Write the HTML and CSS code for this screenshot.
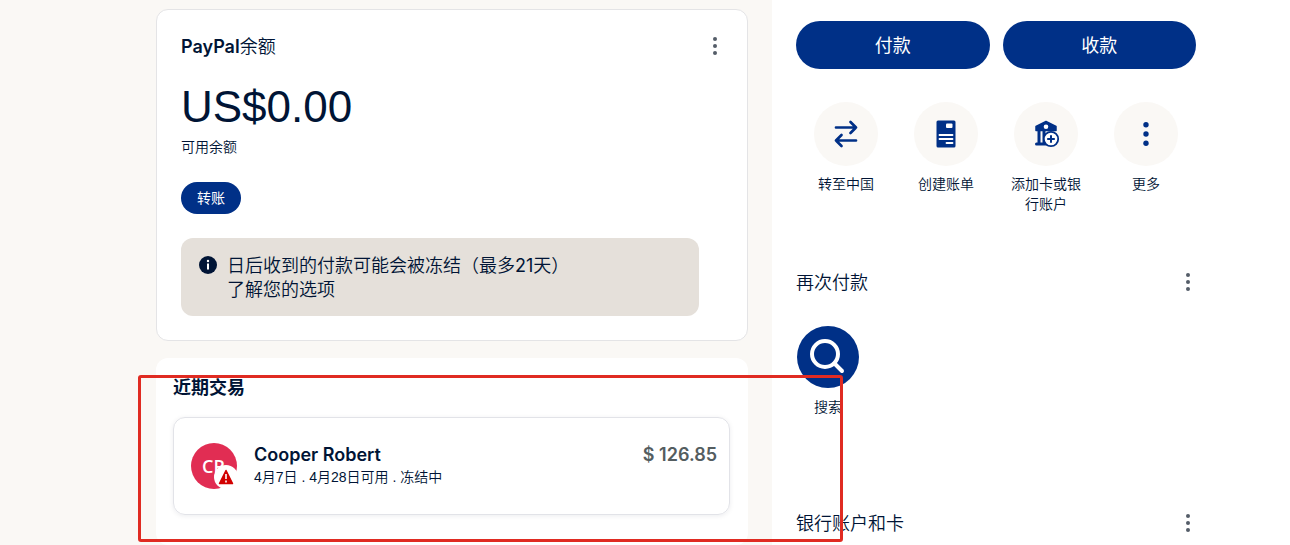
FILE: index.html
```html
<!DOCTYPE html>
<html lang="zh-CN">
<head>
    <meta charset="UTF-8">
    <meta name="viewport" content="width=device-width, initial-scale=1.0">
    <title>PayPal</title>
    <link rel="stylesheet" href="styles.css">
</head>
<body>
    <div class="page">
        <main class="main">
            <section class="card balance">
                <div class="section-head">
                    <h2><strong>PayPal</strong>余额</h2>
                    <button class="dots" type="button" aria-label="更多选项">
                        <svg width="6" height="20" viewBox="0 0 6 20"><circle cx="3" cy="3" r="2"/><circle cx="3" cy="10" r="2"/><circle cx="3" cy="17" r="2"/></svg>
                    </button>
                </div>
                <div class="amount">US$0.00</div>
                <div class="amount-label">可用余额</div>
                <button class="btn btn-small" type="button">转账</button>
                <div class="notice">
                    <svg class="notice-icon" width="18" height="18" viewBox="0 0 18 18">
                        <circle cx="9" cy="9" r="9" fill="#001435"/>
                        <circle cx="9" cy="5" r="1.2" fill="#fff"/>
                        <path d="M9 7.6V13.6" stroke="#fff" stroke-width="2"/>
                    </svg>
                    <p>日后收到的付款可能会被冻结（最多<span class="days">21</span>天）<br>了解您的选项</p>
                </div>
            </section>

            <section class="activity">
                <h2>近期交易</h2>
                <a class="transaction" href="#">
                    <svg class="avatar" width="48" height="48" viewBox="0 0 48 48">
                        <circle cx="23" cy="23" r="23" fill="#e12d53"/>
                        <text x="11" y="30" class="initials">CR</text>
                        <circle cx="35" cy="34" r="12" fill="#fff"/>
                        <path d="M35 27.5L41.5 40.5H28.5Z" fill="#d20000" stroke="#d20000" stroke-width="1.5" stroke-linejoin="round"/>
                        <path d="M35 31V36M35 37.6V39.4" stroke="#fff" stroke-width="1.6"/>
                    </svg>
                    <div class="details">
                        <div class="name">Cooper Robert</div>
                        <div class="status">4月7日 . 4月28日可用 . 冻结中</div>
                    </div>
                    <div class="price">$ 126.85</div>
                </a>
                <div class="highlight"></div>
            </section>
        </main>

        <aside class="side">
            <div class="side-inner">
                <div class="pay-buttons">
                    <button class="btn" type="button">付款</button>
                    <button class="btn" type="button">收款</button>
                </div>

                <nav class="shortcuts">
                    <a class="shortcut" href="#">
                        <span class="circle">
                            <svg width="32" height="32" viewBox="0 0 32 32" fill="none" stroke="#003087" stroke-width="2.7" stroke-linecap="round" stroke-linejoin="round">
                                <path d="M6 9.5H26M20.5 4L26 9.5L20.5 15M26 22.5H6M11.5 17L6 22.5L11.5 28"/>
                            </svg>
                        </span>
                        <span>转至中国</span>
                    </a>
                    <a class="shortcut" href="#">
                        <span class="circle">
                            <svg width="32" height="32" viewBox="0 0 32 32">
                                <rect x="6.5" y="2.5" width="19" height="27" rx="1.5" fill="#003087"/>
                                <rect x="16" y="5.5" width="6.5" height="4.5" rx="1" fill="#fff"/>
                                <path d="M9.5 17H22.5M9.5 21H22.5M16.5 25H22.5" stroke="#fff" stroke-width="1.8" stroke-linecap="round"/>
                            </svg>
                        </span>
                        <span>创建账单</span>
                    </a>
                    <a class="shortcut" href="#">
                        <span class="circle">
                            <svg width="32" height="32" viewBox="0 0 32 32">
                                <path d="M16 3.5L26 8.5V12.5H6V8.5Z" fill="#003087" stroke="#003087" stroke-width="1.5" stroke-linejoin="round"/>
                                <circle cx="16" cy="8.8" r="2.3" fill="#fff"/>
                                <path d="M6.5 26H18" stroke="#003087" stroke-width="3" stroke-linecap="round"/>
                                <path d="M9 12V26M14 12V26" stroke="#003087" stroke-width="3"/>
                                <circle cx="21" cy="21" r="7.2" fill="#fff" stroke="#003087" stroke-width="1.8"/>
                                <path d="M21 17.2V24.8M17.2 21H24.8" stroke="#003087" stroke-width="2"/>
                            </svg>
                        </span>
                        <span>添加卡或银行账户</span>
                    </a>
                    <a class="shortcut" href="#">
                        <span class="circle">
                            <svg width="32" height="32" viewBox="0 0 32 32" fill="#003087">
                                <circle cx="16" cy="6.7" r="2.7"/><circle cx="16" cy="16" r="2.7"/><circle cx="16" cy="25.3" r="2.7"/>
                            </svg>
                        </span>
                        <span>更多</span>
                    </a>
                </nav>

                <section class="again">
                    <div class="section-head">
                        <h2>再次付款</h2>
                        <button class="dots" type="button" aria-label="更多选项">
                            <svg width="6" height="20" viewBox="0 0 6 20"><circle cx="3" cy="3" r="2"/><circle cx="3" cy="10" r="2"/><circle cx="3" cy="17" r="2"/></svg>
                        </button>
                    </div>
                    <a class="search" href="#">
                        <svg width="62" height="62" viewBox="0 0 62 62">
                            <circle cx="31" cy="31" r="31" fill="#003087"/>
                            <circle cx="28" cy="28" r="13" fill="none" stroke="#fff" stroke-width="4"/>
                            <path d="M37.5 37.5L45 45" stroke="#fff" stroke-width="4" stroke-linecap="round"/>
                        </svg>
                        <span>搜索</span>
                    </a>
                </section>

                <section>
                    <div class="section-head">
                        <h2>银行账户和卡</h2>
                        <button class="dots" type="button" aria-label="更多选项">
                            <svg width="6" height="20" viewBox="0 0 6 20"><circle cx="3" cy="3" r="2"/><circle cx="3" cy="10" r="2"/><circle cx="3" cy="17" r="2"/></svg>
                        </button>
                    </div>
                </section>
            </div>
        </aside>
    </div>
</body>
</html>
```
FILE: styles.css
```css
* {
    box-sizing: border-box;
}
body {
    margin: 0;
    font-family: Inter, "Noto Sans CJK SC", sans-serif;
    font-size: 14px;
    line-height: 20px;
    font-weight: 350;
    color: #001435;
    background: #fff;
}
h2, p {
    margin: 0;
    font-size: 18px;
    line-height: 24px;
    font-weight: 350;
}
a {
    color: inherit;
    text-decoration: none;
}
.page {
    display: grid;
    grid-template-columns: minmax(0, 1fr) 518px;
    min-height: 100vh;
}

/* left column */
.main {
    display: flex;
    flex-direction: column;
    align-items: flex-end;
    gap: 17px;
    padding: 9px 24px 0;
    background: #faf8f5;
}
.card, .activity {
    width: 100%;
    max-width: 592px;
    background: #fff;
    border-radius: 12px;
}
.card {
    padding: 25px 24px 24px;
    border: 1px solid #e4e4e6;
}
.section-head {
    display: flex;
    justify-content: space-between;
    align-items: flex-start;
}
.section-head strong {
    font-weight: 600;
}
.dots {
    display: flex;
    padding: 1px 5px;
    border: none;
    background: none;
    fill: #545d68;
    cursor: pointer;
}
.amount {
    margin-top: 20px;
    font-family: "Liberation Sans", Arial, sans-serif;
    font-size: 44px;
    line-height: 56px;
    font-weight: 400;
}
.amount-label {
    margin: 2px 0 25px;
}
.btn {
    display: block;
    height: 48px;
    padding: 0 16px 2px;
    border: none;
    border-radius: 24px;
    background: #003087;
    color: #fff;
    font-family: inherit;
    font-size: 18px;
    font-weight: 400;
    cursor: pointer;
}
.btn-small {
    height: 32px;
    font-size: 14px;
}
.notice {
    display: flex;
    gap: 10px;
    margin: 24px 24px 0 0;
    padding: 16px 18px 14px;
    border-radius: 12px;
    background: #e5e0da;
}
.notice-icon {
    flex: none;
    margin-top: 2px;
}
.days {
    font-weight: 400;
}

.activity {
    position: relative;
    flex: 1;
    padding: 18px 18px 18px 17px;
}
.activity h2 {
    font-weight: 700;
}
.transaction {
    display: flex;
    margin-top: 17px;
    padding: 25px 12px 23px 17px;
    border: 1px solid #e2e3e8;
    border-radius: 12px;
    box-shadow: 0 1px 5px rgba(0, 20, 53, 0.08);
}
.initials {
    font-family: "Open Sans", sans-serif;
    font-size: 18px;
    font-weight: 600;
    fill: #fff;
}
.details {
    flex: 1;
    margin-left: 15px;
}
.name, .price {
    font-size: 18px;
    line-height: 24px;
    font-weight: 600;
}
.status {
    font-family: "Liberation Sans", "Noto Sans CJK SC", sans-serif;
}
.price {
    color: #545d60;
}
/* red frame round the recent activity, reaches into the right column */
.highlight {
    position: absolute;
    top: 17px;
    left: -18px;
    right: -95px;
    height: 167px;
    border: 3px solid #e02b22;
    border-radius: 3px;
    pointer-events: none;
    z-index: 1;
}

/* right column */
.side {
    padding: 21px 24px 0;
}
.side-inner {
    max-width: 400px;
}
.pay-buttons {
    display: grid;
    grid-template-columns: 1fr 1fr;
    gap: 13px;
}
.shortcuts {
    display: grid;
    grid-template-columns: repeat(4, 1fr);
    margin: 33px 0 57px;
}
.shortcut {
    display: flex;
    flex-direction: column;
    align-items: center;
    gap: 8px;
    padding: 0 12px;
    text-align: center;
}
.circle {
    display: flex;
    align-items: center;
    justify-content: center;
    width: 64px;
    height: 64px;
    border-radius: 50%;
    background: #faf8f5;
}
.again {
    margin-bottom: 95px;
}
.search {
    display: inline-flex;
    flex-direction: column;
    align-items: center;
    gap: 9px;
    margin: 31px 1px 0;
}
```
